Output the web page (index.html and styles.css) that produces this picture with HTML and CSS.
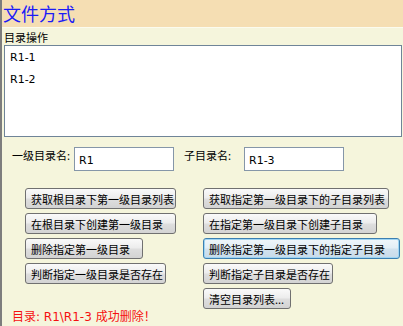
FILE: index.html
```html
<!DOCTYPE html>
<html lang="zh-CN">
<head>
    <meta charset="UTF-8">
    <title>文件方式</title>
    <link rel="stylesheet" href="styles.css">
</head>
<body>

    <div class="header">文件方式</div>

    <div class="panel">
        <div class="caption">目录操作</div>

        <!-- elenco directory -->
        <div class="listbox">
            <div class="item">R1-1</div>
            <div class="item">R1-2</div>
        </div>

        <div class="fields">
            <label class="lbl lbl-main" for="dir">一级目录名:</label>
            <input class="txt" type="text" id="dir" value="R1">
            <label class="lbl lbl-sub" for="sub">子目录名:</label>
            <input class="txt" type="text" id="sub" value="R1-3">
        </div>

        <div class="buttons">
            <button class="btn w151">获取根目录下第一级目录列表</button>
            <button class="btn w186">获取指定第一级目录下的子目录列表</button>
            <button class="btn w151">在根目录下创建第一级目录</button>
            <button class="btn w174">在指定第一级目录下创建子目录</button>
            <button class="btn w118">删除指定第一级目录</button>
            <button class="btn w197 focus">删除指定第一级目录下的指定子目录</button>
            <button class="btn w141">判断指定一级目录是否存在</button>
            <button class="btn w130">判断指定子目录是否存在</button>
            <span></span>
            <button class="btn w88">清空目录列表...</button>
        </div>

        <div class="status">目录: R1\R1-3 成功删除<span class="cjk">！</span></div>
    </div>

</body>
</html>
```

FILE: styles.css
```css
html, body { height: 100%; }
body { margin: 0; background: #f5f5dc; border-left: 2px solid #7d7d7d; font-family: "DejaVu Sans", "Noto Sans CJK SC", sans-serif; font-size: 11px; color: #000; box-sizing: border-box; }
.header { height: 27px; line-height: 26px; padding-left: 1px; background: #f5deb3; color: #1c1cf6; font-family: "Noto Sans CJK SC", sans-serif; font-size: 18px; border-bottom: 1px solid #fbfbee; }
.caption { height: 17px; line-height: 18px; padding-left: 2px; font-family: "Noto Sans CJK SC", sans-serif; }
.listbox { margin: 0 1px 0 2px; height: 88px; padding: 1px 5px; background: #fff; border: 1px solid #6f8498; }
.item { line-height: 22px; font-size: 11px; }
.fields { display: flex; align-items: flex-start; margin-top: 10px; padding-left: 10px; height: 24px; }
.lbl { line-height: 16px; font-family: "Noto Sans CJK SC", sans-serif; }
.lbl-main { width: 62px; }
.lbl-sub { width: 60px; margin-left: 10px; }
.txt { width: 100px; height: 24px; box-sizing: border-box; margin: 0; padding: 2px 4px 0; border: 1px solid #8596a8; font-family: "DejaVu Sans", sans-serif; font-size: 11px; background: #fff; outline: none; }
.buttons { display: grid; grid-template-columns: 178px 1fr; row-gap: 4px; justify-items: start; margin-top: 17px; padding-left: 23px; }
.btn { height: 21px; margin: 0; padding: 0 0 0 5px; text-align: left; font-family: "Noto Sans CJK SC", sans-serif; font-size: 11px; color: #000; border: 1px solid #707070; border-radius: 3px; background: linear-gradient(#fafafa, #ececec 48%, #dedede 52%, #d3d3d3); cursor: pointer; white-space: nowrap; }
.btn.focus { border-color: #3c7fb1; box-shadow: inset 0 0 0 1px #9fd5f3; background: linear-gradient(#f0f6fa, #e2eef6 48%, #d2e2ee 52%, #c8dbea); }
.w88 { width: 88px; }
.w118 { width: 118px; }
.w130 { width: 130px; }
.w141 { width: 141px; }
.w151 { width: 151px; }
.w174 { width: 174px; }
.w186 { width: 186px; }
.w197 { width: 197px; }
.status { margin-top: 0; padding-left: 10px; line-height: 14px; color: #f51010; font-size: 12px; }
.cjk { font-family: "Noto Sans CJK SC", sans-serif; }
```
